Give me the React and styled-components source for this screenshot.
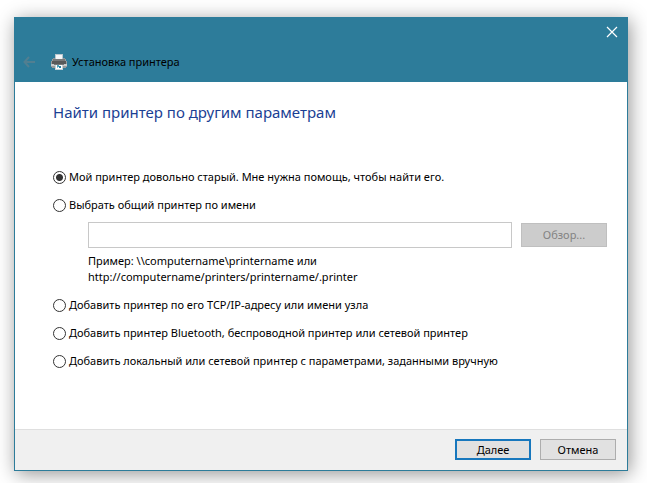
import React, { useState } from "react";
import styled, { createGlobalStyle } from "styled-components";

const GlobalStyle = createGlobalStyle`
  * {
    box-sizing: border-box;
  }

  body {
    margin: 0;
    background: #fff;
    color: #000;
    font-family: "Noto Sans", "Open Sans", sans-serif;
    font-size: 11px;
    line-height: 16px;
  }

  button,
  input {
    font: inherit;
    color: inherit;
  }
`;

const Desktop = styled.div`
  display: flex;
  min-height: 100vh;
  padding: 17px 19px 12px 14px;
  overflow: hidden;
`;

const Dialog = styled.main`
  flex: 1;
  min-width: 0;
  display: flex;
  flex-direction: column;
  background: #fff;
  border: 1px solid #2d7c9a;
  box-shadow: 2px 3px 18px rgba(0, 0, 0, 0.42);
`;

const TitleBar = styled.header`
  background: #2d7c9a;
  padding-bottom: 8px;
`;

const CaptionRow = styled.div`
  display: flex;
  justify-content: flex-end;
  height: 32px;
  padding: 8px 9px 0 0;
`;

const IconButton = styled.button`
  display: flex;
  padding: 0;
  border: none;
  background: none;
`;

const TitleRow = styled.div`
  display: flex;
  align-items: center;
  height: 24px;
  padding-left: 8px;
`;

const Title = styled.h1`
  display: flex;
  align-items: center;
  gap: 5px;
  margin: 0 0 0 15px;
  font-size: 11px;
  font-weight: 400;
`;

const Content = styled.form`
  flex: 1;
  padding: 19px 20px 20px 38px;
`;

const Heading = styled.h2`
  margin: 0 0 44px;
  color: #1b3f94;
  font-size: 15px;
  font-weight: 400;
  line-height: 22px;
`;

const Option = styled.label`
  display: flex;
  align-items: center;
  gap: 3px;
  height: 20px;
  margin-bottom: 8px;
`;

const Radio = styled.input`
  appearance: none;
  flex: none;
  width: 13px;
  height: 13px;
  margin: 0;
  border: 1px solid #333;
  border-radius: 50%;
  background: #fff;

  &:checked {
    background: radial-gradient(circle, #333 3px, #fff 4px);
  }
`;

const ShareBlock = styled.div`
  padding: 0 0 10px 35px;
`;

const ShareRow = styled.div`
  display: flex;
  align-items: center;
  gap: 9px;
  margin: -1px 0 5px;
`;

const ShareInput = styled.input`
  flex: 1;
  min-width: 0;
  height: 26px;
  padding: 0 6px;
  border: 1px solid #c8c8c8;
  background: #fff;
`;

const Hint = styled.p`
  margin: 0;
`;

const Button = styled.button`
  width: ${({ $wide }) => ($wide ? "86px" : "76px")};
  height: ${({ $wide }) => ($wide ? "24px" : "21px")};
  padding: 0;
  border: ${({ $primary }) => ($primary ? "2px solid #1777bd" : "1px solid #adadad")};
  background: #e1e1e1;
  line-height: 16px;

  &:disabled {
    border-color: #bfbfbf;
    background: #ccc;
    color: #838383;
  }
`;

const Footer = styled.footer`
  display: flex;
  justify-content: flex-end;
  gap: 9px;
  padding: 9px 11px 10px;
  border-top: 1px solid #dfdfdf;
  background: #f0f0f0;
`;

const BackIcon = () => (
  <svg width="13" height="12" viewBox="0 0 13 12" fill="none" stroke="#517f91" strokeWidth="2">
    <path d="M12 6H1.5M6 1L1.5 6L6 11" />
  </svg>
);

const CloseIcon = () => (
  <svg width="12" height="12" viewBox="0 0 12 12" fill="none" stroke="#fff" strokeWidth="1.2">
    <path d="M1 1L11 11M11 1L1 11" />
  </svg>
);

const PrinterIcon = () => (
  <svg width="16" height="16" viewBox="0 0 16 16" shapeRendering="crispEdges">
    <path d="M4 0H12V6H4Z" fill="#b9c6cc" />
    <path d="M5 1H11V6H5Z" fill="#f4f6f7" />
    <path d="M2 4H4V6H2ZM12 4H14V6H12Z" fill="#8d9498" />
    <path d="M1 5H15V7H16V13H15V14H1V13H0V7H1Z" fill="#9a9c9d" />
    <path d="M2 5H14V7H2Z" fill="#77797a" />
    <path d="M1 7H15V10H1Z" fill="#58595a" />
    <path d="M0 10H16V12H0Z" fill="#c9cbcc" />
    <path d="M3 10H13V11H3Z" fill="#77797a" />
    <path d="M4 11H12V16H4Z" fill="#c4d3d9" />
    <path d="M5 11H11V15H5Z" fill="#fff" />
    <path d="M6 11H8V13H6Z" fill="#4da2bd" />
    <path d="M8 12H10V14H8Z" fill="#247f9f" />
    <path d="M6 13H7V14H6Z" fill="#8bc3d3" />
  </svg>
);

const options = [
  { id: "old", label: "Мой принтер довольно старый. Мне нужна помощь, чтобы найти его." },
  { id: "shared", label: "Выбрать общий принтер по имени" },
  { id: "tcp", label: "Добавить принтер по его TCP/IP-адресу или имени узла" },
  { id: "bluetooth", label: "Добавить принтер Bluetooth, беспроводной принтер или сетевой принтер" },
  { id: "manual", label: "Добавить локальный или сетевой принтер с параметрами, заданными вручную" },
];

const App = () => {
  const [selected, setSelected] = useState("old");
  const [shareName, setShareName] = useState("");

  return (
    <Desktop>
      <GlobalStyle />
      <Dialog>
        <TitleBar>
          <CaptionRow>
            <IconButton type="button" aria-label="Закрыть">
              <CloseIcon />
            </IconButton>
          </CaptionRow>
          <TitleRow>
            <IconButton type="button" aria-label="Назад" disabled>
              <BackIcon />
            </IconButton>
            <Title>
              <PrinterIcon />
              Установка принтера
            </Title>
          </TitleRow>
        </TitleBar>

        <Content id="printer-form" onSubmit={(e) => e.preventDefault()}>
          <Heading>Найти принтер по другим параметрам</Heading>
          {options.map((option) => (
            <React.Fragment key={option.id}>
              <Option>
                <Radio
                  type="radio"
                  name="search"
                  value={option.id}
                  checked={selected === option.id}
                  onChange={() => setSelected(option.id)}
                />
                {option.label}
              </Option>
              {/* Path field belongs to the shared printer option */}
              {option.id === "shared" && (
                <ShareBlock>
                  <ShareRow>
                    <ShareInput
                      type="text"
                      aria-label="Имя общего принтера"
                      aria-describedby="share-hint"
                      value={shareName}
                      disabled={selected !== "shared"}
                      onChange={(e) => setShareName(e.target.value)}
                    />
                    <Button type="button" $wide disabled={selected !== "shared"}>
                      Обзор...
                    </Button>
                  </ShareRow>
                  <Hint id="share-hint">
                    Пример: \\computername\printername или
                    <br />
                    http://computername/printers/printername/.printer
                  </Hint>
                </ShareBlock>
              )}
            </React.Fragment>
          ))}
        </Content>

        <Footer>
          <Button type="submit" form="printer-form" $primary>
            Далее
          </Button>
          <Button type="button">Отмена</Button>
        </Footer>
      </Dialog>
    </Desktop>
  );
};

export default App;
